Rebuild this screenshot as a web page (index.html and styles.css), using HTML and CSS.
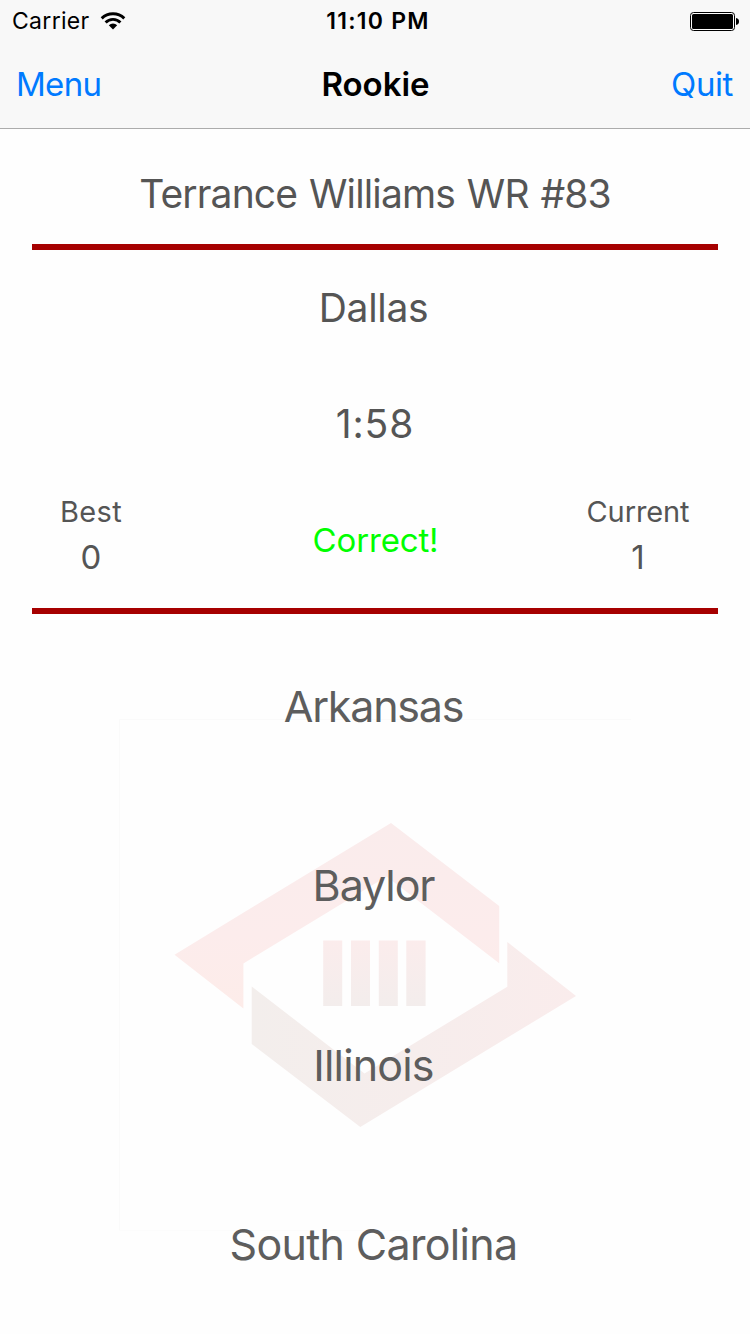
FILE: index.html
```html
<!DOCTYPE html>
<html lang="en">
<head>
<meta charset="utf-8">
<title>Rookie</title>
<link rel="stylesheet" href="styles.css">
</head>
<body>
<div class="screen">
  <header class="header">
    <div class="status">
      <div class="carrier">
        <span>Carrier</span>
        <svg class="wifi" width="26" height="20" viewBox="0 0 26 20" fill="none" stroke="#000">
          <path d="M1.7 7.4A16.2 16.2 0 0 1 24.3 7.4" stroke-width="2.9"/>
          <path d="M5.6 11.5A10.3 10.3 0 0 1 20.4 11.5" stroke-width="2.9"/>
          <path d="M13 18.6L8.8 14.2A6.1 6.1 0 0 1 17.2 14.2Z" fill="#000" stroke="none"/>
        </svg>
      </div>
      <span class="time">11:10 PM</span>
      <svg class="battery" width="50" height="19" viewBox="0 0 50 19">
        <rect x="0.5" y="0.5" width="44" height="18" rx="3" fill="#fff" stroke="#000"/>
        <rect x="2" y="2" width="41" height="15" rx="1.5"/>
        <path d="M46 6C48.3 6.3 49 8 49 9.5S48.3 12.7 46 13Z"/>
      </svg>
    </div>
    <nav class="nav">
      <a class="nav-link">Menu</a>
      <h1 class="nav-title">Rookie</h1>
      <a class="nav-link nav-quit">Quit</a>
    </nav>
  </header>
  <section class="question">
    <div class="player">Terrance Williams WR #83</div>
    <div class="rule"></div>
    <div class="team">Dallas</div>
    <div class="timer">1:58</div>
    <div class="scores">
      <div class="score">
        <span class="label best">Best</span>
        <span class="value">0</span>
      </div>
      <div class="result">Correct!</div>
      <div class="score">
        <span class="label">Current</span>
        <span class="value">1</span>
      </div>
    </div>
    <div class="rule"></div>
  </section>
  <main class="answers">
    <svg class="watermark" width="512" height="512" viewBox="119 719 512 512">
      <defs>
        <linearGradient id="upper" x1="0" y1="0" x2="0" y2="1">
          <stop offset="0" stop-color="#faecec"/>
          <stop offset="0.6" stop-color="#fcecec"/>
          <stop offset="1" stop-color="#fdece9"/>
        </linearGradient>
        <linearGradient id="lower" x1="0" y1="0" x2="1" y2="0">
          <stop offset="0" stop-color="#f3eeec"/>
          <stop offset="0.5" stop-color="#f6edec"/>
          <stop offset="1" stop-color="#faecec"/>
        </linearGradient>
        <linearGradient id="bars" x1="0" y1="0" x2="0" y2="1">
          <stop offset="0" stop-color="#fbecec"/>
          <stop offset="1" stop-color="#f3edec"/>
        </linearGradient>
      </defs>
      <path fill="none" stroke="#fafafa" d="M631 719.5H119.5V1230.5"/>
      <path fill="none" stroke="#fcfcfc" d="M120 1230.5H410"/>
      <path fill="url(#upper)" d="M174.5 954.7L391 823L499.2 906V963.3L386.6 876.6L243.4 963.5V1008.5Z"/>
      <path fill="url(#lower)" d="M251.7 986.5L364.5 1073.5L507.3 986.7V942L576 996L360.3 1127L251.7 1044Z"/>
      <path fill="url(#bars)" d="M323.2 940.5h19v65.5h-19zM351 940.5h19v65.5h-19zM378.8 940.5h19v65.5h-19zM406.3 940.5h19.3v65.5h-19.3z"/>
    </svg>
    <div class="answer arkansas">Arkansas</div>
    <div class="answer baylor">Baylor</div>
    <div class="answer illinois">Illinois</div>
    <div class="answer carolina">South Carolina</div>
  </main>
</div>
</body>
</html>
```

FILE: styles.css
```css
* { box-sizing: border-box; }
body {
  margin: 0;
  background: #fefefe;
  font-family: Inter, "Liberation Sans", sans-serif;
  color: #555;
}
.screen {
  width: 750px;
  height: 1334px;
  display: flex;
  flex-direction: column;
  overflow: hidden;
}

/* Status and navigation bars */
.header {
  height: 129px;
  background: #f8f8f8;
  border-bottom: 1px solid #acacac;
  color: #000;
}
.status {
  height: 40px;
  display: grid;
  grid-template-columns: 1fr auto 1fr;
  align-items: center;
  padding: 1px 10px 0 12px;
  font-size: 23px;
  line-height: 39px;
}
.carrier span, .time { padding-top: 1px; }
.carrier {
  display: flex;
  align-items: center;
  gap: 10px;
  letter-spacing: 0.3px;
}
.time {
  font-weight: 600;
  font-size: 23px;
  letter-spacing: 1.25px;
  padding-left: 4px;
}
.battery { justify-self: end; }
.nav {
  height: 88px;
  display: grid;
  grid-template-columns: 1fr auto 1fr;
  padding: 0 17px 0 16px;
  font-size: 33px;
  line-height: 88px;
}
.nav-title {
  margin: 0;
  padding-left: 2px;
  font-size: 33px;
  font-weight: 600;
}
.nav-link { color: #007aff; letter-spacing: -0.7px; }
.nav-quit { text-align: right; letter-spacing: -0.4px; }

/* Question panel */
.question {
  padding: 15px 32px 0;
  text-align: center;
  font-size: 39px;
}
.rule { height: 6px; background: #a60000; }
.player { line-height: 100px; letter-spacing: -0.85px; word-spacing: 1.7px; }
.team { line-height: 116px; letter-spacing: -0.3px; padding-right: 3px; }
.timer { line-height: 116px; letter-spacing: 0.9px; }
.scores {
  height: 126px;
  display: grid;
  grid-template-columns: 118px 1fr 160px;
}
.score {
  display: flex;
  flex-direction: column;
  padding-top: 6px;
}
.label { font-size: 29px; line-height: 47px; letter-spacing: -0.1px; }
.best { letter-spacing: 0.35px; }
.value { font-size: 33px; line-height: 45px; }
.result {
  padding-left: 43px;
  font-size: 33px;
  line-height: 117px;
  letter-spacing: -0.15px;
  color: #0f0;
}

/* Answer choices */
.answers {
  flex: 1;
  position: relative;
  display: grid;
  grid-template-rows: repeat(4, 179.25px);
  padding: 3px 3px 0 0;
  text-align: center;
  font-size: 43px;
  line-height: 179px;
  color: #5d5d5d;
}
.watermark { position: absolute; left: 119px; top: 105px; }
.answer { position: relative; }
.arkansas { letter-spacing: -1.2px; }
.baylor { letter-spacing: -1.1px; }
.illinois { letter-spacing: -0.85px; }
.carolina { letter-spacing: -0.68px; }
```
